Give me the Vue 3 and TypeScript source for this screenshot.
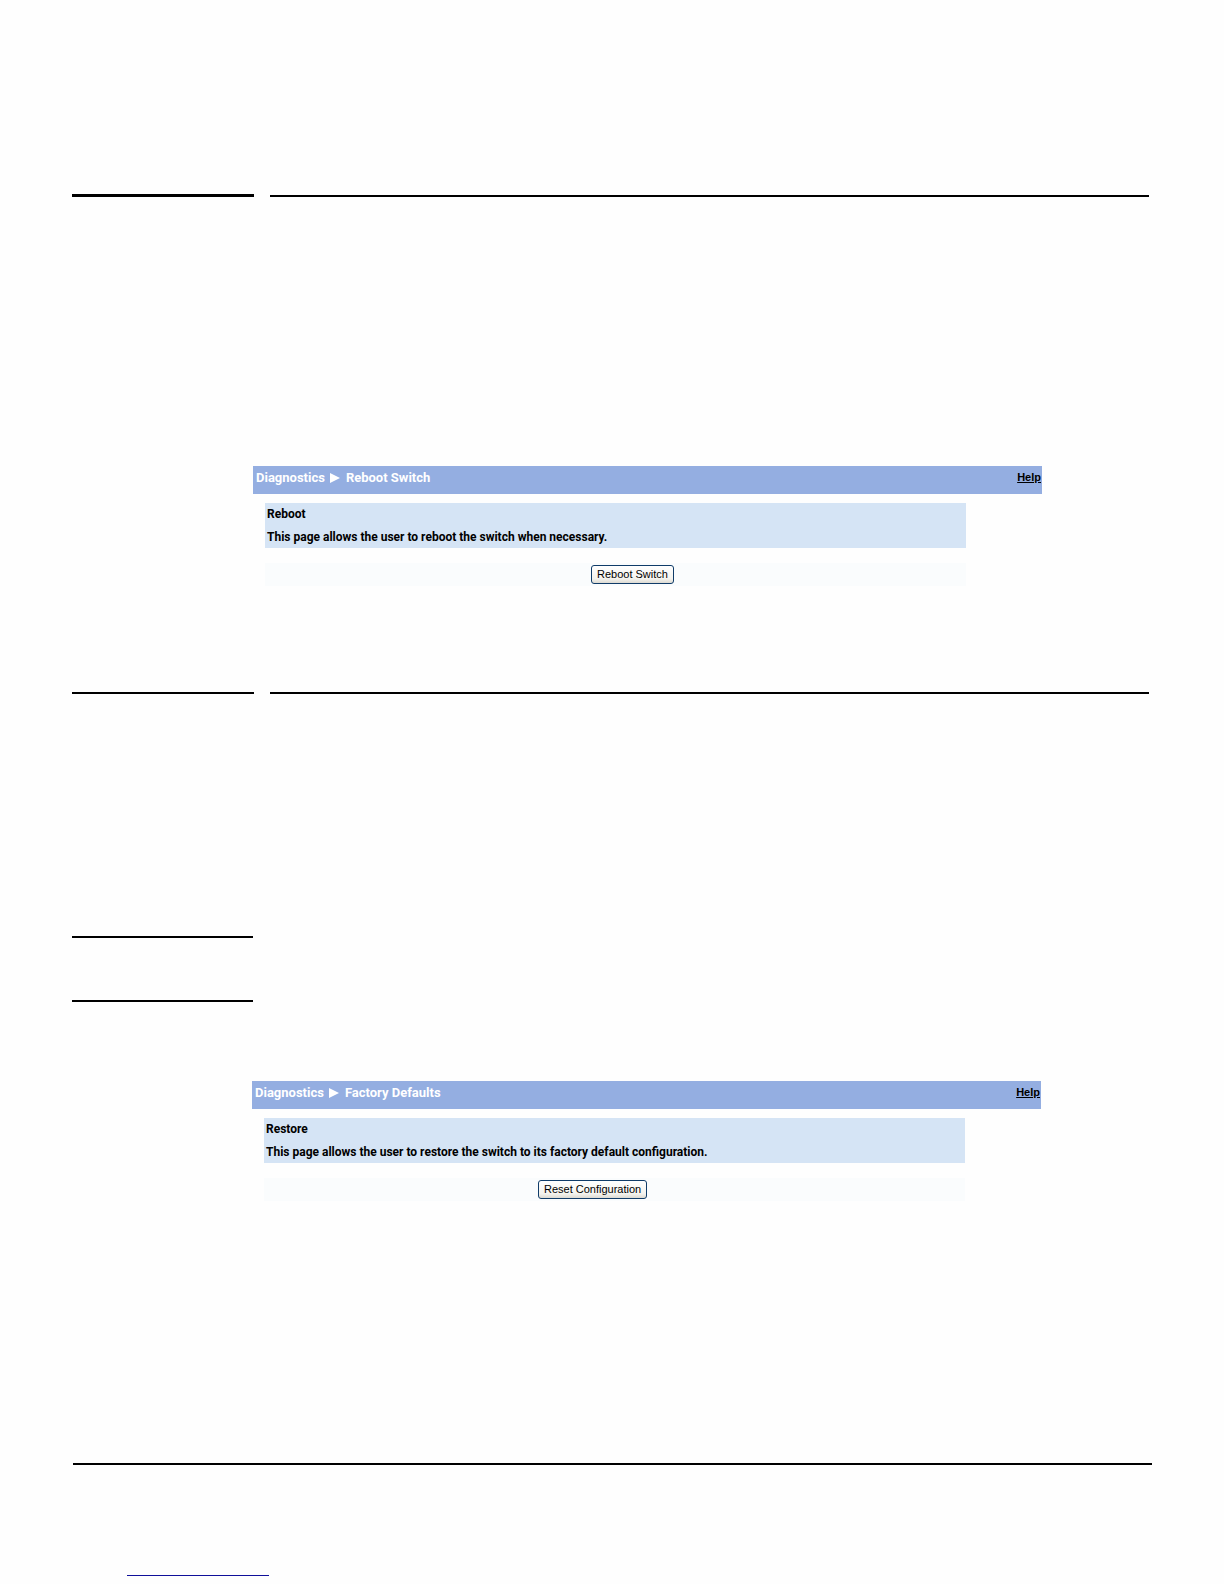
<script setup lang="ts">
interface Panel {
  id: string
  page: string
  title: string
  description: string
  action: string
}

const reboot: Panel = {
  id: 'reboot',
  page: 'Reboot Switch',
  title: 'Reboot',
  description: 'This page allows the user to reboot the switch when necessary.',
  action: 'Reboot Switch',
}

const restore: Panel = {
  id: 'restore',
  page: 'Factory Defaults',
  title: 'Restore',
  description: 'This page allows the user to restore the switch to its factory default configuration.',
  action: 'Reset Configuration',
}

const sections: Panel[] = [reboot, restore]
</script>

<template>
  <main class="page">
    <section v-for="s in sections" :key="s.id" class="section" :class="s.id">
      <div class="divider">
        <hr class="rule side" />
        <hr class="rule" />
      </div>
      <div v-if="s.id === 'restore'" class="note">
        <hr class="rule" />
        <hr class="rule" />
      </div>
      <div class="panel">
        <header class="bar">
          <h1 class="crumbs">
            <span>Diagnostics</span>
            <svg class="arrow" viewBox="0 0 10 10" aria-hidden="true"><path d="M0 0L10 5L0 10Z" /></svg>
            <span>{{ s.page }}</span>
          </h1>
          <a class="help" href="#">Help</a>
        </header>
        <div class="content">
          <div class="info">
            <h2>{{ s.title }}</h2>
            <p>{{ s.description }}</p>
          </div>
          <div class="actions">
            <button type="button">{{ s.action }}</button>
          </div>
        </div>
      </div>
    </section>
    <footer class="footer">
      <hr class="rule" />
      <hr class="link-line" />
    </footer>
  </main>
</template>

<style>
body {
  margin: 0;
  background: #fefefe;
}
</style>

<style scoped>
.page {
  padding: 194px 75px 8px 72px;
  font-family: "Liberation Sans", Arial, sans-serif;
  font-size: 12px;
  color: #000;
}

.rule {
  flex: 1;
  height: 2px;
  margin: 0;
  border: 0;
  background: #000;
}

.divider {
  display: flex;
  align-items: flex-end;
  gap: 16px;
}

.side {
  flex: 0 0 182px;
}

.reboot .side {
  height: 3px;
}

.panel {
  margin: 269px 107px 0 181px;
}

.restore .panel {
  margin: 79px 108px 0 180px;
}

.restore {
  margin-top: 106px;
}

.note {
  display: flex;
  flex-direction: column;
  gap: 62px;
  width: 181px;
  margin-top: 242px;
}

.note .rule {
  flex: none;
}

.bar {
  display: flex;
  justify-content: space-between;
  height: 28px;
  background: #94aee1;
}

.crumbs {
  display: flex;
  align-items: center;
  gap: 5px;
  height: 24px;
  margin: 0;
  padding-left: 3px;
  font-family: Roboto, "Liberation Sans", sans-serif;
  font-size: 13px;
  line-height: 24px;
  font-weight: 700;
  color: #fff;
}

.arrow {
  width: 10px;
  height: 10px;
  margin-right: 1px;
  fill: #fff;
}

.help {
  padding-right: 1px;
  font-weight: 700;
  font-size: 11px;
  line-height: 22px;
  color: #000;
  text-decoration: underline;
}

.content {
  margin: 9px 76px 0 12px;
}

.info {
  height: 45px;
  padding-left: 2px;
  background: #d5e4f5;
}

.info h2,
.info p {
  margin: 0;
  font-family: Roboto, "Liberation Sans", sans-serif;
  font-size: 12px;
  line-height: 23px;
  font-weight: 700;
}

.actions {
  margin-top: 15px;
  padding: 2px 0 2px 326px;
  background: #fafcfd;
}

.restore .actions {
  padding-left: 274px;
}

button {
  display: block;
  height: 19px;
  padding: 0 5px;
  border: 1px solid #103c69;
  border-radius: 3px;
  background: linear-gradient(#fff, #f4f3ee 75%, #dddad2);
  font-family: inherit;
  font-size: 11px;
  line-height: 17px;
  color: #000;
  white-space: nowrap;
}

.footer {
  margin: 262px -3px 0 1px;
}

.link-line {
  width: 142px;
  height: 1px;
  margin: 110px 0 0 54px;
  border: 0;
  background: #10109a;
}
</style>
